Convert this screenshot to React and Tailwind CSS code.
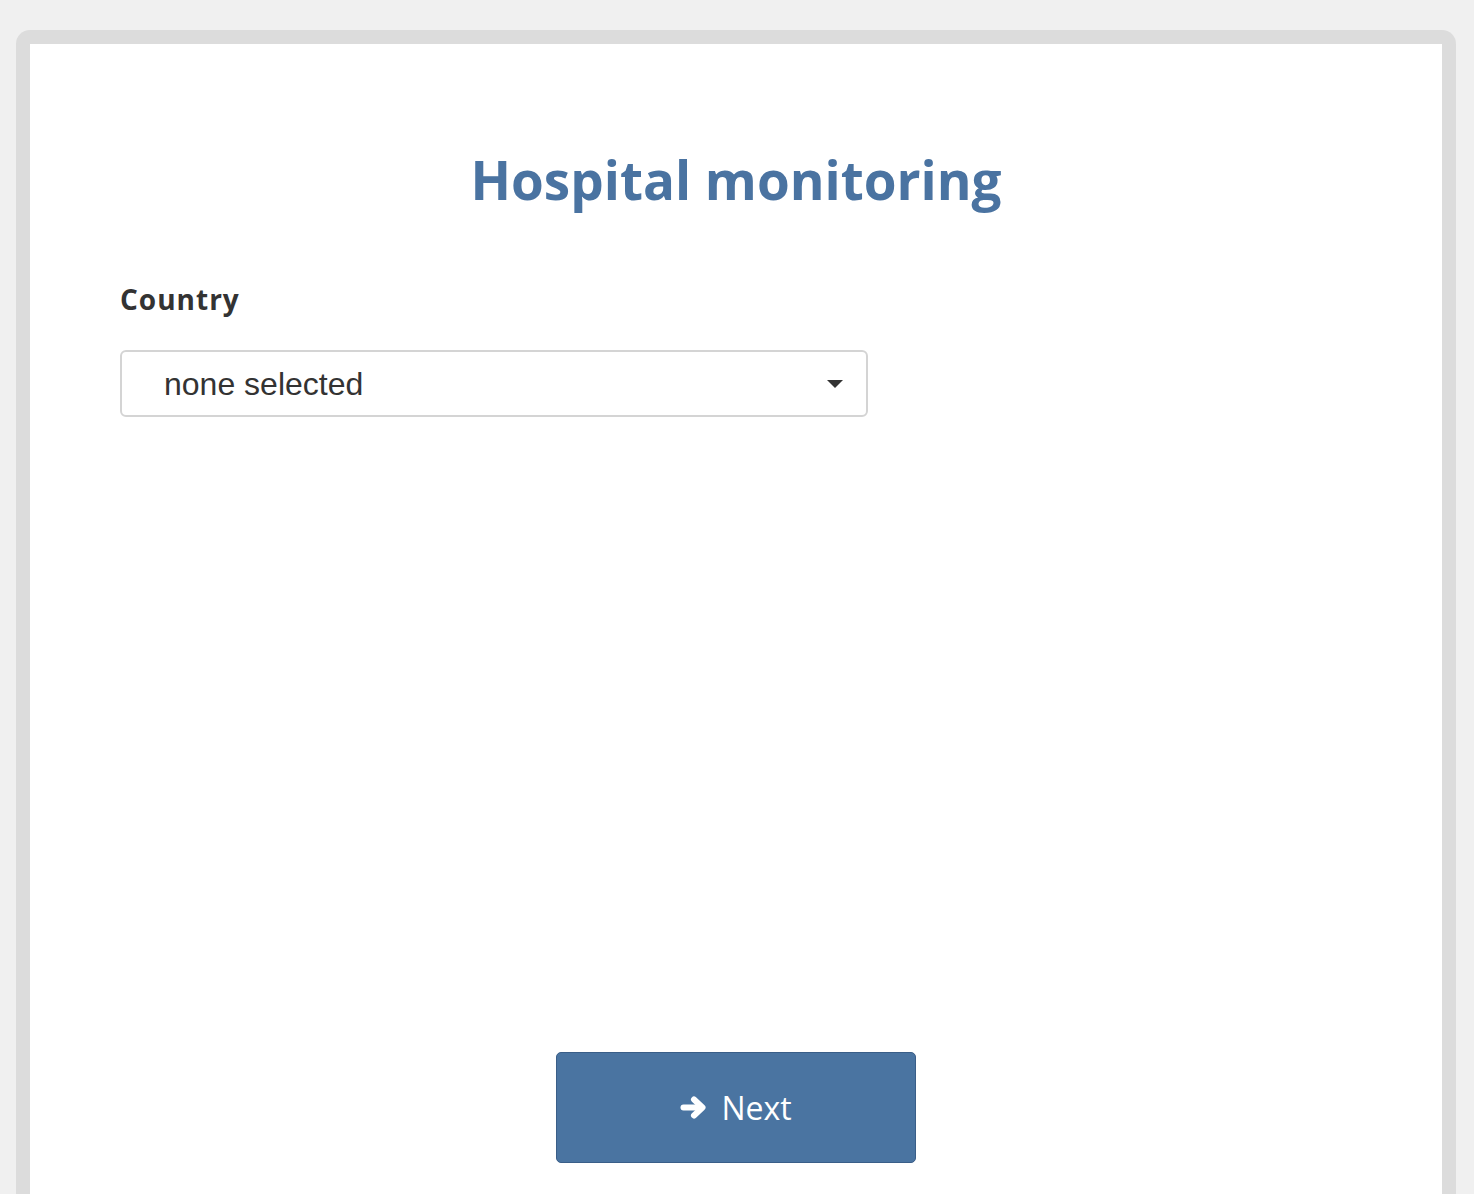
import { useState } from 'react'

const ArrowIcon = () => (
  <svg width="27" height="23" viewBox="0 0 27 23" fill="none" className="shrink-0">
    <path d="M3.5 11.5h17" stroke="white" strokeWidth="6" strokeLinecap="round" />
    <path d="M14 3.5l8.5 8-8.5 8" stroke="white" strokeWidth="6" strokeLinecap="round" strokeLinejoin="round" />
  </svg>
)

const App = () => {
  const [country, setCountry] = useState('none selected')

  return (
    <div className="h-[1194px] overflow-hidden bg-[#f0f0f0] pt-[30px] pl-[16px]">

      {/* ===== FRAME ===== */}
      <div className="w-[1440px] rounded-t-[14px] bg-[#dcdcdc] px-[14px] pt-[14px]">

        <div className="bg-white min-h-[1200px] pt-[109px] px-[90px]">

          <h1 className="text-center text-[53px] leading-none font-bold text-[#4a73a1] font-['Open_Sans',sans-serif]">
            Hospital monitoring
          </h1>

          <p className="mt-[79px] text-[28px] leading-none font-bold tracking-[1px] text-[#333] font-['Open_Sans',sans-serif]">
            Country
          </p>

          {/* ===== SELECT ===== */}
          <div className="mt-[37px] w-[748px] h-[67px] flex items-center justify-between pl-[42px] pr-[23px] border-2 border-[#d4d4d4] rounded-[6px] bg-white">
            <span className="text-[32px] text-[#333] font-['Liberation_Sans',Arial,sans-serif]">
              {country}
            </span>
            <span className="w-0 h-0 border-l-[8px] border-r-[8px] border-t-[8px] border-l-transparent border-r-transparent border-t-[#333]" />
          </div>

          {/* ===== BUTTON ===== */}
          <div className="flex justify-center mt-[635px]">
            <button
              onClick={() => setCountry(country)}
              className="w-[360px] h-[111px] flex items-center justify-center gap-[14px] bg-[#4a74a1] border border-[#3a5e88] rounded-[5px] text-white text-[32px] font-['Open_Sans',sans-serif]"
            >
              <ArrowIcon />
              <span>Next</span>
            </button>
          </div>

        </div>

      </div>

    </div>
  )
}

export default App
